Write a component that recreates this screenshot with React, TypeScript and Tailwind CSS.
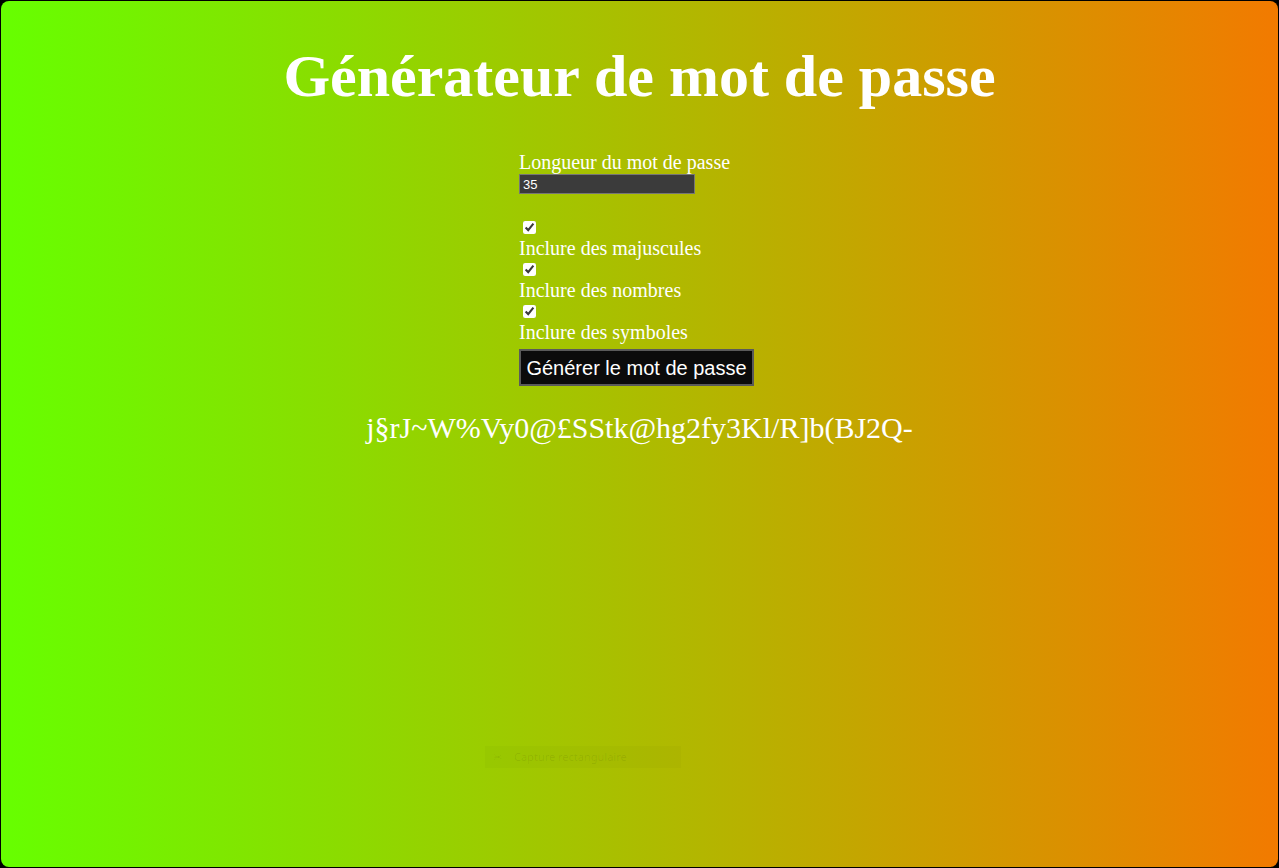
import { useState } from 'react'

const options = [
  { id: 'upper', label: 'Inclure des majuscules' },
  { id: 'numbers', label: 'Inclure des nombres' },
  { id: 'symbols', label: 'Inclure des symboles' },
]

export default function App() {
  const [length, setLength] = useState('35')
  const [checked, setChecked] = useState<Record<string, boolean>>({
    upper: true,
    numbers: true,
    symbols: true,
  })

  return (
    <div className="h-[868px] w-full bg-black p-px">
      <div
        className="relative h-full w-full overflow-hidden rounded-lg bg-[linear-gradient(to_right,#66ff00,#f27a00)] text-white"
        style={{ fontFamily: '"Liberation Serif", "Times New Roman", serif' }}
      >
        <h1 className="pt-[45px] text-center text-[60px] font-bold leading-none">
          Générateur de mot de passe
        </h1>

        <div className="mx-auto mt-[45px] w-[241px]">
          <label htmlFor="length" className="block text-[20px] leading-[23px]">
            Longueur du mot de passe
          </label>
          <input
            id="length"
            type="text"
            value={length}
            onChange={(e) => setLength(e.target.value)}
            className="block h-[20px] w-[176px] border border-[#767676] bg-[#3b3b3b] px-[3px] text-[13px] text-white outline-none"
            style={{ fontFamily: '"Liberation Sans", Arial, sans-serif' }}
          />

          <div className="mt-[27px]">
            {options.map((opt) => (
              <div key={opt.id}>
                <input
                  id={opt.id}
                  type="checkbox"
                  checked={checked[opt.id]}
                  onChange={() => setChecked({ ...checked, [opt.id]: !checked[opt.id] })}
                  className="ml-[4px] mt-[3px] mb-[3px] block h-[13px] w-[13px] accent-white"
                />
                <label htmlFor={opt.id} className="block text-[20px] leading-[23px]">
                  {opt.label}
                </label>
              </div>
            ))}
          </div>

          <button
            className="mt-[5px] h-[37px] w-[235px] border-2 border-[#5a5a5a] bg-[#0b0b0b] text-[20px] text-white"
            style={{ fontFamily: '"Liberation Sans", Arial, sans-serif' }}
          >
            Générer le mot de passe
          </button>
        </div>

        <p className="mt-[23px] text-center text-[30px] leading-[37px]">
          j§rJ~W%Vy0@£SStk@hg2fy3Kl/R]b(BJ2Q-
        </p>

        <div
          className="absolute left-[484px] top-[745px] flex h-[22px] w-[196px] items-center gap-[12px] bg-black/[0.02] px-[8px] text-[11px] text-black/[0.08]"
          style={{ fontFamily: '"Noto Sans", sans-serif' }}
        >
          <span>✂</span>
          <span>Capture rectangulaire</span>
        </div>
      </div>
    </div>
  )
}
